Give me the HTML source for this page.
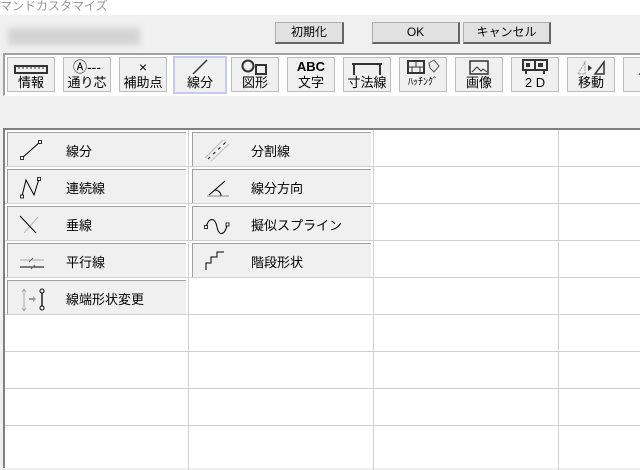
<!DOCTYPE html>
<html><head><meta charset="utf-8"><style>
*{margin:0;padding:0;box-sizing:border-box}
body{width:640px;height:460px;overflow:hidden;background:#f0f0f0;font-family:"Liberation Sans","Noto Sans CJK JP",sans-serif;position:relative;font-size:12px;color:#000}
.a{position:absolute}
.title{left:0;top:-3px;width:640px;height:18px;background:#fff;color:#999;font-size:12px;padding-left:0}
.btn{position:absolute;top:22px;height:22px;background:#e1e1e1;border:1px solid #adadad;border-right:2px solid #666;border-bottom:2px solid #666;text-align:center;line-height:19px;font-size:12px}
.blur{left:8px;top:28px;width:132px;height:17px;background:#d4d4d4;filter:blur(3px)}
.tb{left:3px;top:53px;width:640px;height:43px;border-top:2px solid #a0a0a0;border-left:2px solid #a0a0a0;border-bottom:1px solid #fff;background:#fff}
.tbtn{position:absolute;top:57px;width:48px;height:35px;background:#f0f0f0;border:1px solid #bdbdbd;text-align:center;font-size:13px}
.tbtn .ic{height:17px;display:flex;align-items:flex-end;justify-content:center}
.tbtn .lb{line-height:16px}
.sel{border:2px solid #c8c8f0}
.grid{left:3px;top:128px;width:640px;height:340px;background:#fff;border-top:2px solid #808080;border-left:2px solid #808080}
.hl{position:absolute;left:5px;width:640px;height:1px;background:#d0d0d0}
.vl{position:absolute;top:130px;width:1px;height:340px;background:#d0d0d0}
.cb{position:absolute;height:34px;width:179px;background:#f0f0f0;border-top:1px solid #a0a0a0;border-left:1px solid #a0a0a0;font-size:13px}
.cb span{position:absolute;top:8px}
.cb svg{position:absolute;left:8px;top:6px}
</style></head><body>
<div class="a title">マンドカスタマイズ</div>
<div class="a blur"></div>
<div class="btn" style="left:275px;width:69px">初期化</div>
<div class="btn" style="left:372px;width:88px">OK</div>
<div class="btn" style="left:463px;width:88px">キャンセル</div>
<div class="a tb"></div>
<div class="tbtn" style="left:7px"><div class="ic"><svg width="34" height="10"><rect x="1" y="1" width="32" height="7" fill="none" stroke="#333" stroke-width="2"/><path d="M5 1v3M9 1v3M13 1v3M17 1v3M21 1v3M25 1v3M29 1v3" stroke="#333"/></svg></div><div class="lb">情報</div></div>
<div class="tbtn" style="left:63px"><div class="ic" style="font-size:14px;line-height:16px">Ⓐ---</div><div class="lb">通り芯</div></div>
<div class="tbtn" style="left:119px"><div class="ic" style="font-size:14px;line-height:16px">×</div><div class="lb">補助点</div></div>
<div class="tbtn sel" style="left:173px;width:54px;top:56px;height:38px"><div class="ic"><svg width="20" height="18"><path d="M3 17L17 3" stroke="#333" stroke-width="1.5"/></svg></div><div class="lb">線分</div></div>
<div class="tbtn" style="left:231px"><div class="ic"><svg width="30" height="16"><circle cx="8" cy="7" r="5.5" fill="none" stroke="#333" stroke-width="2"/><rect x="16" y="6" width="10" height="9" fill="none" stroke="#333" stroke-width="2"/></svg></div><div class="lb">図形</div></div>
<div class="tbtn" style="left:287px"><div class="ic" style="font-weight:bold;font-size:13px;line-height:16px">ABC</div><div class="lb">文字</div></div>
<div class="tbtn" style="left:343px"><div class="ic"><svg width="34" height="14"><path d="M2 3h30M4 2v12M30 2v12" stroke="#333" stroke-width="2"/></svg></div><div class="lb">寸法線</div></div>
<div class="tbtn" style="left:399px"><div class="ic"><svg width="36" height="16"><rect x="3" y="2" width="16" height="12" fill="none" stroke="#333" stroke-width="2"/><path d="M3 8h16M11 2v6M7 8v6M15 8v6" stroke="#333"/><path d="M24 4l5-3 5 6-5 6-4-4z" fill="none" stroke="#555"/></svg></div><div class="lb" style="font-size:10px">ﾊｯﾁﾝｸﾞ</div></div>
<div class="tbtn" style="left:455px"><div class="ic"><svg width="22" height="16"><rect x="2" y="2" width="18" height="13" fill="none" stroke="#333" stroke-width="1.5"/><path d="M4 13l5-5 4 4 2-2 4 3" stroke="#333" fill="none"/></svg></div><div class="lb">画像</div></div>
<div class="tbtn" style="left:511px"><div class="ic"><svg width="28" height="16"><rect x="2" y="1" width="24" height="10" fill="none" stroke="#333" stroke-width="2"/><path d="M14 1v10M5 11v4M23 11v4" stroke="#333" stroke-width="2"/><rect x="5" y="4" width="4" height="4" fill="#333"/><rect x="17" y="4" width="5" height="4" fill="#333"/></svg></div><div class="lb">2 D</div></div>
<div class="tbtn" style="left:567px"><div class="ic"><svg width="32" height="16"><path d="M3 15L10 3v12z" fill="none" stroke="#999" stroke-dasharray="2 1"/><path d="M13 6l4 3-4 3z" fill="#333"/><path d="M20 15L29 3v12z" fill="none" stroke="#333" stroke-width="1.5"/></svg></div><div class="lb">移動</div></div>
<div class="tbtn" style="left:623px"><div class="ic"><svg width="20" height="16"><path d="M3 15L12 3v12z" fill="none" stroke="#333" stroke-width="1.5"/></svg></div><div class="lb">複</div></div>
<div class="a grid"></div>
<div class="hl" style="top:166px"></div><div class="hl" style="top:203px"></div><div class="hl" style="top:240px"></div><div class="hl" style="top:277px"></div><div class="hl" style="top:314px"></div><div class="hl" style="top:351px"></div><div class="hl" style="top:388px"></div><div class="hl" style="top:425px"></div>
<div class="vl" style="left:188px"></div><div class="vl" style="left:373px"></div><div class="vl" style="left:558px"></div>
<div class="cb" style="left:7px;top:132px"><svg width="30" height="24"><path d="M6 19L24 3" stroke="#000"/><rect x="4.5" y="17.5" width="3" height="3" fill="#fff" stroke="#000" stroke-width=".8"/><rect x="22.5" y="1.5" width="3" height="3" fill="#fff" stroke="#000" stroke-width=".8"/></svg><span style="left:58px">線分</span></div>
<div class="cb" style="left:192px;top:132px"><svg width="30" height="24"><path d="M4 19L22 1M10 22L28 5" stroke="#bbb"/><path d="M7 20L25 3" stroke="#000" stroke-dasharray="3 4"/></svg><span style="left:58px">分割線</span></div>
<div class="cb" style="left:7px;top:169px"><svg width="30" height="24"><path d="M6 20L10 4 18 19 23 3" stroke="#000" fill="none"/><rect x="4.5" y="19" width="3" height="3" fill="#fff" stroke="#000" stroke-width=".8"/><rect x="21.5" y="1.5" width="3" height="3" fill="#fff" stroke="#000" stroke-width=".8"/></svg><span style="left:58px">連続線</span></div>
<div class="cb" style="left:192px;top:169px"><svg width="30" height="24"><path d="M8 19L24 5" stroke="#000"/><path d="M6 20h22" stroke="#888"/><path d="M14 14a6 6 0 0 1 6 6" stroke="#000" fill="none"/></svg><span style="left:58px">線分方向</span></div>
<div class="cb" style="left:7px;top:206px"><svg width="30" height="24"><path d="M8 20L22 4" stroke="#bbb"/><path d="M4 3L20 20" stroke="#000"/></svg><span style="left:58px">垂線</span></div>
<div class="cb" style="left:192px;top:206px"><svg width="32" height="24"><path d="M5 14c3-10 9-10 11 0s8 8 10-2" stroke="#000" fill="none"/><rect x="3.5" y="12.5" width="3" height="3" fill="#fff" stroke="#000" stroke-width=".8"/><rect x="25" y="10" width="3" height="3" fill="#fff" stroke="#000" stroke-width=".8"/></svg><span style="left:58px">擬似スプライン</span></div>
<div class="cb" style="left:7px;top:243px"><svg width="32" height="24"><path d="M4 10h24" stroke="#aaa"/><path d="M4 17h24" stroke="#000"/><path d="M13 12l4-4M15 19l4-4" stroke="#666"/></svg><span style="left:58px">平行線</span></div>
<div class="cb" style="left:192px;top:243px"><svg width="30" height="24"><path d="M5 20v-7h5v-6h6v-5h7" stroke="#000" fill="none"/></svg><span style="left:58px">階段形状</span></div>
<div class="cb" style="left:7px;top:280px"><svg width="32" height="26"><path d="M8 2v22" stroke="#aaa"/><path d="M6 5l2-3 2 3M6 21l2 3 2-3" stroke="#aaa" fill="none"/><path d="M13 11h4v-2l3 3-3 3v-2h-4z" fill="#999"/><path d="M26 4v17" stroke="#000" stroke-width="1.3"/><circle cx="26" cy="4" r="2" fill="#fff" stroke="#000"/><circle cx="26" cy="21" r="2" fill="#fff" stroke="#000"/></svg><span style="left:58px">線端形状変更</span></div>
</body></html>
